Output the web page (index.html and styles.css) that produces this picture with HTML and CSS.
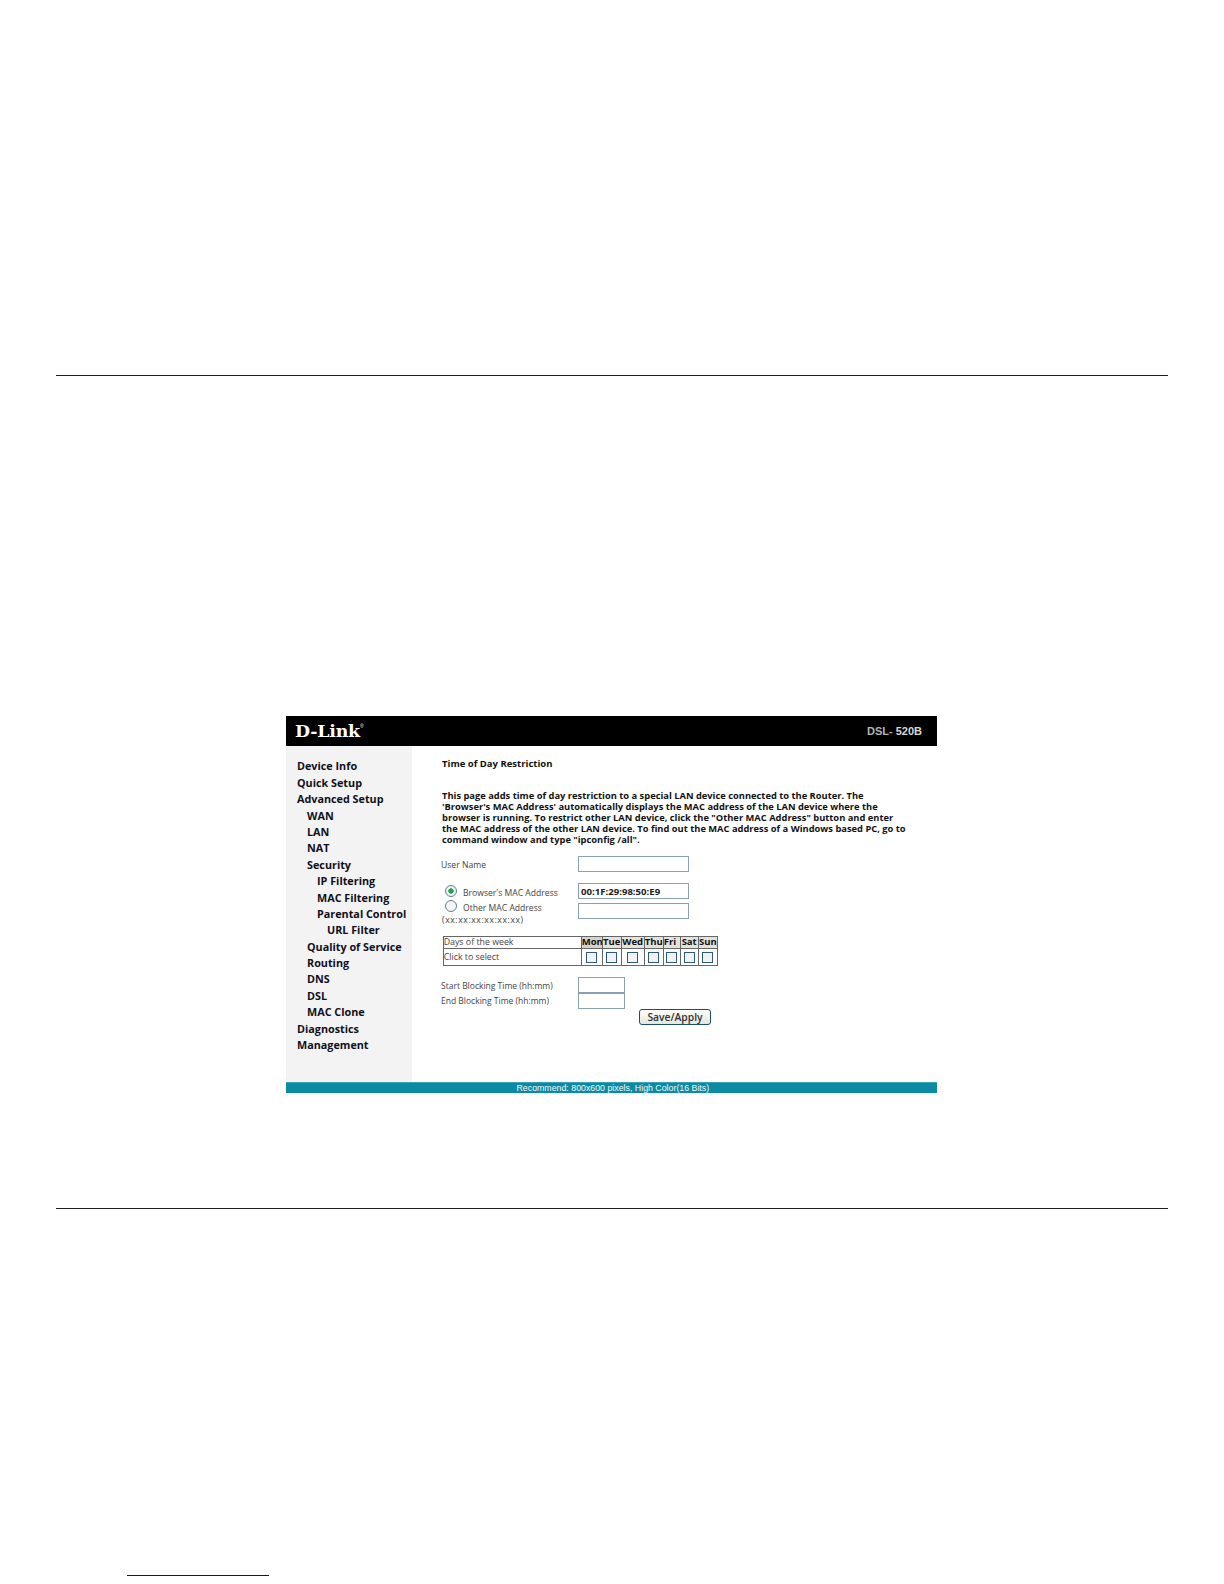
FILE: index.html
```html
<!DOCTYPE html>
<html lang="en">
<head>
<meta charset="utf-8">
<title>Time of Day Restriction</title>
<link rel="stylesheet" href="styles.css">
</head>
<body>
<div class="page">
  <div class="rule"></div>
  <div class="screen">
    <header class="topbar">
      <span class="logo">D-Link<sup class="reg">®</sup></span>
      <span class="model">DSL- <b>520B</b></span>
    </header>
    <div class="main">
      <nav class="side">
        <a class="n0">Device Info</a>
        <a class="n0">Quick Setup</a>
        <a class="n0">Advanced Setup</a>
        <a class="n1">WAN</a>
        <a class="n1">LAN</a>
        <a class="n1">NAT</a>
        <a class="n1">Security</a>
        <a class="n2">IP Filtering</a>
        <a class="n2">MAC Filtering</a>
        <a class="n2">Parental Control</a>
        <a class="n3">URL Filter</a>
        <a class="n1">Quality of Service</a>
        <a class="n1">Routing</a>
        <a class="n1">DNS</a>
        <a class="n1">DSL</a>
        <a class="n1">MAC Clone</a>
        <a class="n0">Diagnostics</a>
        <a class="n0">Management</a>
      </nav>
      <section class="content">
        <h1 class="title">Time of Day Restriction</h1>
        <p class="intro">This page adds time of day restriction to a special LAN device connected to the Router. The<br>'Browser's MAC Address' automatically displays the MAC address of the LAN device where the<br>browser is running. To restrict other LAN device, click the "Other MAC Address" button and enter<br>the MAC address of the other LAN device. To find out the MAC address of a Windows based PC, go to<br>command window and type "ipconfig /all".</p>
        <div class="row row-user">
          <label class="lbl">User Name</label>
          <input class="field" type="text">
        </div>
        <div class="row row-browser">
          <label class="lbl radio-lbl"><input class="radio" type="radio" name="mac" checked><span>Browser's MAC Address</span></label>
          <input class="field mono" type="text" value="00:1F:29:98:50:E9">
        </div>
        <div class="row row-other">
          <label class="lbl radio-lbl other"><input class="radio" type="radio" name="mac"><span>Other MAC Address</span><span class="hint">(xx:xx:xx:xx:xx:xx)</span></label>
          <input class="field" type="text">
        </div>
        <table class="days">
          <tr class="head">
            <td class="first">Days of the week</td>
            <th class="c1">Mon</th><th class="c2">Tue</th><th class="c3">Wed</th><th class="c4">Thu</th><th class="c5">Fri</th><th class="c6">Sat</th><th class="c7">Sun</th>
          </tr>
          <tr class="pick">
            <td class="first">Click to select</td>
            <td><input class="check" type="checkbox"></td><td><input class="check" type="checkbox"></td><td><input class="check" type="checkbox"></td><td><input class="check" type="checkbox"></td><td><input class="check" type="checkbox"></td><td><input class="check" type="checkbox"></td><td><input class="check" type="checkbox"></td>
          </tr>
        </table>
        <div class="row row-start">
          <label class="lbl">Start Blocking Time (hh:mm)</label>
          <input class="field short" type="text">
        </div>
        <div class="row row-end">
          <label class="lbl">End Blocking Time (hh:mm)</label>
          <input class="field short" type="text">
        </div>
        <div class="actions"><button class="save" type="button">Save/Apply</button></div>
      </section>
    </div>
    <footer class="foot">Recommend: 800x600 pixels, High Color(16 Bits)</footer>
  </div>
  <div class="rule"></div>
  <div class="link-line"></div>
</div>
</body>
</html>
```
FILE: styles.css
```css
* { box-sizing: border-box; }
html, body { margin: 0; padding: 0; background: #fff; }
body { font-family: "Open Sans", "Noto Sans", "DejaVu Sans", sans-serif; color: #111; }

.page { width: 1224px; height: 1584px; padding: 375px 56px 0; }
.rule { width: 1112px; height: 1.4px; background: #1c1c1c; }

.screen { width: 651.5px; margin: 340px 0 114.6px 229.5px; }

.topbar {
  height: 30px;
  background: #000;
  color: #fff;
  display: flex;
  align-items: center;
  justify-content: space-between;
  padding: 0 15px 0 9.5px;
}
.logo { font-family: "DejaVu Serif", "Liberation Serif", serif; font-weight: 700; font-size: 17.4px; line-height: 1; letter-spacing: -.2px; }
.reg { font-size: 5px; vertical-align: 9px; line-height: 0; font-family: "Liberation Sans", sans-serif; font-weight: 400; }
.model { font-family: "Liberation Sans", sans-serif; font-size: 11px; font-weight: 700; color: #b4b4b4; white-space: pre; }
.model b { color: #d8d8d8; }

.main { display: flex; height: 336px; }

.side { width: 126.5px; background: #f3f3f3; padding-top: 12px; flex: none; }
.side a { display: block; height: 16.4px; line-height: 16.4px; font-size: 10.8px; font-weight: 700; color: #10101c; white-space: nowrap; }
.n0 { padding-left: 11.5px; }
.n1 { padding-left: 21.5px; }
.n2 { padding-left: 31.5px; }
.n3 { padding-left: 41.5px; }

.content { flex: 1; padding-left: 30px; }
.title { margin: 12px 0 0; font-size: 9.5px; line-height: 12px; font-weight: 700; color: #111; }
.intro { margin: 21px 0 0; font-size: 9.34px; line-height: 10.8px; font-weight: 700; white-space: nowrap; color: #111; }

.row { display: flex; align-items: flex-start; position: relative; }
.lbl { width: 137px; flex: none; font-size: 8.6px; color: #444; line-height: 12px; margin-left: -1px; }
.row-user { margin-top: 11px; height: 16px; }
.row-user .lbl { padding-top: 3px; }
.row-browser { margin-top: 11px; height: 16px; }
.row-other { margin-top: 4px; height: 16px; }

.radio-lbl { display: block; padding-left: 22px; position: relative; }
.row-browser .radio-lbl { padding-top: 4px; }
.row-other .radio-lbl { margin-top: -1px; }
.radio {
  appearance: none;
  -webkit-appearance: none;
  position: absolute;
  left: 4px;
  top: 2px;
  width: 12px;
  height: 12px;
  margin: 0;
  border: 1px solid #5d7f92;
  border-radius: 50%;
  background: #f4f6f6;
}
.radio:checked { background: radial-gradient(circle, #2f9a5a 0 2.4px, #eef5f0 3px); }
.row-other .radio { top: -2px; }
.hint { display: block; margin: 0 0 0 -21px; letter-spacing: .6px; white-space: nowrap; }

.field {
  width: 111px;
  height: 16px;
  margin: 0;
  padding: 0 2px;
  border: 1px solid #8aa0b4;
  background: #fff;
  font-family: inherit;
  font-size: 9.6px;
  font-weight: 700;
  color: #222;
  border-radius: 0;
  outline: none;
}
.field.mono { height: 15.5px; }
.field.short { width: 47px; height: 16px; }

.days {
  margin: 16.5px 0 0 .7px;
  width: 274.5px;
  height: 29.5px;
  border-collapse: collapse;
  table-layout: fixed;
  border: 1px solid #555;
  font-size: 8.8px;
  color: #444;
}
.days td, .days th { border: 1px solid #666; padding: 0; text-align: center; line-height: 10px; }
.days .first { width: 138px; text-align: left; }
.days th { background: #e4e2dc; font-weight: 700; color: #111; font-size: 9.5px; white-space: nowrap; overflow: hidden; }
.days .c1 { width: 21px; background: #d6d2c8; }
.days .c2 { width: 19px; }
.days .c3 { width: 23px; }
.days .c4 { width: 19px; }
.days .c5 { width: 17px; text-align: left; }
.days .c6 { width: 18px; }
.days .c7 { width: 19.5px; }
.head { height: 12px; }
.pick { height: 17.5px; }
.check {
  appearance: none;
  -webkit-appearance: none;
  display: block;
  width: 11px;
  height: 11px;
  margin: 0 auto;
  border: 1px solid #2c5a78;
  background: #f1f2f1;
  border-radius: 0;
}

.row-start { margin-top: 11px; height: 16px; }
.row-end { margin-top: 0; height: 16px; }
.row-start .lbl, .row-end .lbl { font-size: 8.5px; }
.row-start .lbl { padding-top: 3px; }
.row-end .lbl { padding-top: 2px; }

.actions { margin: 0 0 0 197px; }
.save {
  display: block;
  width: 72px;
  height: 16px;
  padding: 0;
  border: 1px solid #1d4f6b;
  border-radius: 3px;
  background: linear-gradient(#fdfdfb, #e6e6e0);
  font-family: inherit;
  font-size: 10.3px;
  font-weight: 600;
  color: #333;
}

.foot {
  height: 11px;
  background: #0a8ba3;
  border-top: 1px solid #3aa3b5;
  color: #f2f8f9;
  font-family: "Liberation Sans", sans-serif;
  font-size: 8.8px;
  line-height: 10px;
  padding-left: 231px;
  white-space: nowrap;
}

.link-line { width: 142px; height: 1px; margin: 366px 0 0 71px; background: #0b0b85; }
```
